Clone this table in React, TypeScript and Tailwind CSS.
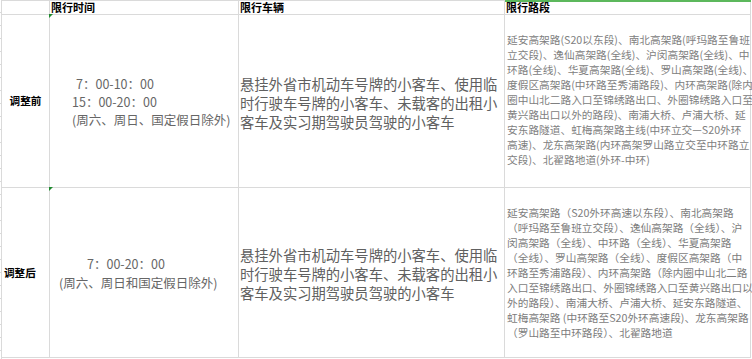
const routesBefore = [
  '延安高架路(S20以东段)、南北高架路(呼玛路至鲁班',
  '立交段)、逸仙高架路(全线)、沪闵高架路(全线)、中',
  '环路(全线)、华夏高架路(全线)、罗山高架路(全线)、',
  '度假区高架路(中环路至秀浦路段)、内环高架路(除内',
  '圈中山北二路入口至锦绣路出口、外圈锦绣路入口至',
  '黄兴路出口以外的路段)、南浦大桥、卢浦大桥、延',
  '安东路隧道、虹梅高架路主线(中环立交—S20外环',
  '高速)、龙东高架路(内环高架罗山路立交至中环路立',
  '交段)、北翟路地道(外环-中环)',
];

const routesAfter = [
  '延安高架路（S20外环高速以东段）、南北高架路',
  '（呼玛路至鲁班立交段）、逸仙高架路（全线）、沪',
  '闵高架路（全线）、中环路（全线）、华夏高架路',
  '（全线）、罗山高架路（全线）、度假区高架路（中',
  '环路至秀浦路段）、内环高架路（除内圈中山北二路',
  '入口至锦绣路出口、外圈锦绣路入口至黄兴路出口以',
  '外的路段）、南浦大桥、卢浦大桥、延安东路隧道、',
  '虹梅高架路 (中环路至S20外环高速段)、龙东高架路',
  '（罗山路至中环路段）、北翟路地道',
];

const vehicles = [
  '悬挂外省市机动车号牌的小客车、使用临',
  '时行驶车号牌的小客车、未载客的出租小',
  '客车及实习期驾驶员驾驶的小客车',
];

const cols = 'grid grid-cols-[48px_189px_266px_246px]';
const cell = 'border-r border-b border-[#dadada] relative';

function GreenMark() {
  return (
    <span className="absolute left-[-1px] top-[-1px] w-0 h-0 border-t-[4px] border-r-[4px] border-t-[#1e8a2e] border-r-transparent" />
  );
}

function Lines({ lines }: { lines: string[] }) {
  return (
    <div>
      {lines.map((l, i) => (
        <div key={i} className="whitespace-nowrap">{l}</div>
      ))}
    </div>
  );
}

export default function App() {
  const ticks = Array.from({ length: 28 });
  return (
    <div className="w-[752px] h-[359px] bg-white overflow-hidden flex font-['Noto_Sans_CJK_SC',sans-serif]">
      {/* left sliver of previous column */}
      <div className="w-[2px] shrink-0 border-r border-[#dadada] flex flex-col">
        {ticks.map((_, i) => (
          <div key={i} className="h-[13px] w-px shrink-0 border-b border-[#dadada]" />
        ))}
      </div>

      <div className="flex flex-col">
        {/* header */}
        <div className={`${cols} h-[15px] border-t border-[#dadada]`}>
          <div className={cell} />
          <div className={`${cell} pl-px text-[11px] leading-[13px] font-bold text-black`}>限行时间</div>
          <div className={`${cell} pl-px text-[11px] leading-[13px] font-bold text-black`}>限行车辆</div>
          <div className={`${cell} pl-px text-[11px] leading-[13px] font-bold text-black`}>
            <span className="absolute left-0 right-[-1px] top-[-1px] h-[2px] bg-[#5cb85c]" />
            限行路段
          </div>
        </div>

        {/* before */}
        <div className={`${cols} h-[173px]`}>
          <div className={`${cell} flex items-center justify-center text-[10.6px] font-bold text-black`}>调整前</div>
          <div className={`${cell} flex items-center pl-[22px] pt-px text-[12.5px] leading-[18px] text-[#666]`}>
            <GreenMark />
            <div>
              <div className="ml-[4px]">7：00-10：00</div>
              <div>15：00-20：00</div>
              <div className="whitespace-nowrap">(周六、周日、国定假日除外)</div>
            </div>
          </div>
          <div className={`${cell} flex items-center pl-px pt-[2px] text-[14.3px] leading-[19px] text-[#606060]`}>
            <Lines lines={vehicles} />
          </div>
          <div className={`${cell} flex items-center pl-[2px] pb-[3px] text-[10.7px] leading-[15px] text-[#808080]`}>
            <Lines lines={routesBefore} />
          </div>
        </div>

        {/* after */}
        <div className={`${cols} h-[170px]`}>
          <div className={`${cell} flex items-center justify-start pl-[2px] text-[10.6px] font-bold text-black`}>
            <span>调整后</span>
          </div>
          <div className={`${cell} flex items-center text-[12.5px] leading-[19px] text-[#666]`}>
            <GreenMark />
            <div>
              <div className="ml-[37px]">7：00-20：00</div>
              <div className="ml-[9px] whitespace-nowrap">(周六、周日和国定假日除外)</div>
            </div>
          </div>
          <div className={`${cell} flex items-center pl-px pt-[2px] text-[14.3px] leading-[19px] text-[#606060]`}>
            <Lines lines={vehicles} />
          </div>
          <div className={`${cell} flex items-center pl-[2px] text-[10.7px] leading-[15.1px] text-[#7c7c7c]`}>
            <Lines lines={routesAfter} />
          </div>
        </div>
      </div>
    </div>
  );
}
